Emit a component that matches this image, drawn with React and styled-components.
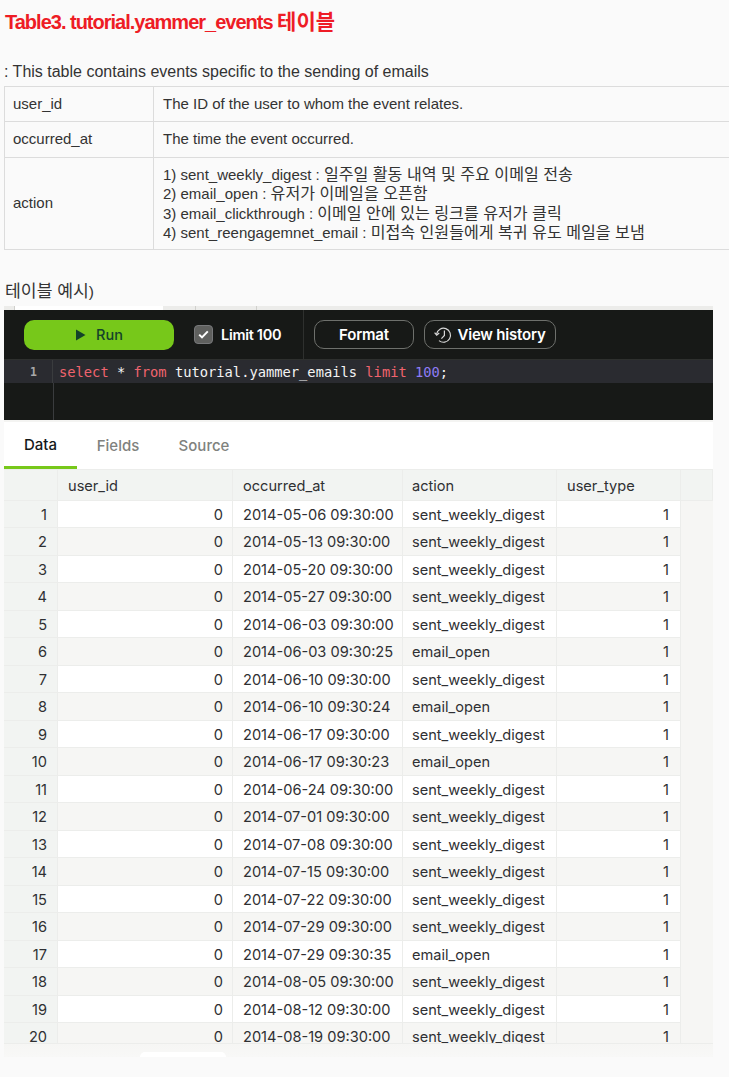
import React from 'react'
import styled, { createGlobalStyle } from 'styled-components'

const GlobalStyle = createGlobalStyle`
  html, body {
    margin: 0;
    background: #fafafa;
    overflow: hidden;
  }
`

const KR = `'Liberation Sans', 'Noto Sans CJK KR', sans-serif`

const Page = styled.div`
  width: 729px;
  height: 1077px;
  overflow: hidden;
  font-family: ${KR};
  color: #333;
`

const Title = styled.h2`
  margin: 0;
  padding: 10px 0 0 5px;
  height: 34px;
  font-size: 20px;
  line-height: 24px;
  font-weight: 700;
  letter-spacing: -1px;
  color: #ee1c25;
`

// hangul runs wider than the latin text around them
const Ko = styled.span`
  font-size: ${p => p.$size}px;
  letter-spacing: 0;
`

const Lead = styled.p`
  margin: 0;
  padding: 17px 0 0 4px;
  height: 25px;
  font-size: 16px;
  line-height: 22px;
`

const InfoTable = styled.table`
  margin: 0 0 0 4px;
  width: 740px;
  border-collapse: collapse;
  table-layout: fixed;
  font-size: 15px;
  line-height: 18.5px;

  td {
    border: 1px solid #dcdcdc;
    padding: 0 9px;
  }
`

const InfoKey = styled.td`
  width: 132px;
  && {
    padding: 0 8px;
  }
`

const InfoRow = styled.tr`
  height: ${p => p.$h}px;
`

const Example = styled.p`
  margin: 0;
  padding: 30px 0 0 5px;
  height: 26px;
  font-size: 15.5px;
  line-height: 22px;
`

const Shot = styled.div`
  margin-left: 4px;
  width: 709px;
  position: relative;
`

const TabStrip = styled.div`
  height: 4px;
  display: flex;
  background: #ececea;
`

const StripTab = styled.div`
  width: ${p => p.$w}px;
  background: ${p => (p.$active ? '#fff' : 'transparent')};
  border-right: ${p => (p.$active ? 'none' : '1px solid #d0d0cc')};
  box-sizing: border-box;
`

const Editor = styled.div`
  background: #171917;
  height: 110px;
`

const Toolbar = styled.div`
  height: 49px;
  display: flex;
  align-items: center;
  padding-left: 20px;
  border-bottom: 1px solid #2e302e;
`

const RunButton = styled.div`
  width: 150px;
  height: 30px;
  border-radius: 10px;
  background: #77c81a;
  color: #14432a;
  display: flex;
  align-items: center;
  justify-content: center;
  gap: 10px;
  font-family: 'Inter', sans-serif;
  font-size: 14.5px;
  font-weight: 500;
`

const LimitBox = styled.div`
  margin-left: 20px;
  width: 19px;
  height: 19px;
  border-radius: 4px;
  background: #5f605e;
  border: 1px solid #77787a;
  box-sizing: border-box;
  display: flex;
  align-items: center;
  justify-content: center;
`

const LimitLabel = styled.span`
  margin-left: 8px;
  width: 82px;
  color: #fff;
  font-family: 'Inter', sans-serif;
  font-size: 14.5px;
  font-weight: 600;
  letter-spacing: -0.3px;
`

const ToolDivider = styled.div`
  width: 1px;
  height: 49px;
  background: #2e302e;
  margin-right: 10px;
`

const OutlineButton = styled.div`
  height: 29px;
  width: ${p => p.$w}px;
  margin-right: 10px;
  box-sizing: border-box;
  border: 1px solid #6e706c;
  border-radius: 10px;
  color: #fff;
  display: flex;
  align-items: center;
  justify-content: center;
  gap: 5px;
  font-family: 'Inter', sans-serif;
  font-size: 15px;
  font-weight: 600;
  letter-spacing: -0.2px;
`

const CodeArea = styled.div`
  height: 60px;
  position: relative;
  font-family: 'DejaVu Sans Mono', monospace;
  font-size: 13.75px;
`

const CodeLine = styled.div`
  height: 23px;
  display: flex;
  align-items: center;
  background: #2a2b30;
  color: #f4f4f4;
`

const CodeText = styled.span`
  white-space: pre;
`

const LineNumber = styled.div`
  width: 49px;
  height: 100%;
  flex-shrink: 0;
  display: flex;
  align-items: center;
  justify-content: center;
  padding-left: 11px;
  box-sizing: border-box;
  border-right: 1px solid #3a3c3e;
  margin-right: 6px;
  color: #a8a8a8;
  font-size: 11.5px;
  font-weight: 700;
`

const Gutter = styled.div`
  height: 37px;
  width: 49px;
  border-right: 1px solid #3a3c3e;
`

const Keyword = styled.span`
  color: #f0646e;
`

const NumberLit = styled.span`
  color: #8f7cf6;
`

const ResultTabs = styled.div`
  height: 49px;
  background: #fff;
  border-top: 2px solid #f4f4f2;
  box-sizing: border-box;
  display: flex;
`

const ResultTab = styled.div`
  width: ${p => p.$w}px;
  height: 47px;
  box-sizing: border-box;
  display: flex;
  align-items: center;
  justify-content: center;
  font-family: 'Inter', sans-serif;
  font-size: 15px;
  font-weight: 500;
  color: ${p => (p.$active ? '#14181a' : '#80827e')};
  border-bottom: ${p => (p.$active ? '3px solid #77c81a' : '0')};
`

const GridClip = styled.div`
  height: 575px;
  overflow: hidden;
  border-top: 1px solid #ecedeb;
  border-bottom: 1px solid #ecedeb;
  box-sizing: border-box;
  background: #f2f4f2;
`

const DataTable = styled.table`
  width: 709px;
  border-collapse: separate;
  border-spacing: 0;
  table-layout: fixed;
  font-family: 'Inter', sans-serif;
  font-size: 14.6px;
  color: #2f3033;
`

const HeadCell = styled.th`
  height: 27.5px;
  padding: 2px 10px 0 ${p => p.$left ?? 10}px;
  text-align: left;
  font-weight: 400;
  background: #f2f4f2;
  border-right: 1px solid #ecedeb;
  border-bottom: 1px solid #ecedeb;
`

const IndexCell = styled.td`
  height: 24.5px;
  padding: 2px 10px 0 0;
  text-align: right;
  background: #f2f4f2;
  border-right: 1px solid #ecedeb;
  border-bottom: 1px solid #ecedeb;
`

const DataCell = styled.td`
  height: 24.5px;
  padding: 2px ${p => p.$right ?? 10}px 0 ${p => p.$left ?? 10}px;
  text-align: ${p => (p.$num ? 'right' : 'left')};
  background: ${p => (p.$odd ? '#fff' : '#f6f6f4')};
  border-right: 1px solid #ecedeb;
  border-bottom: 1px solid #ecedeb;
  white-space: nowrap;
  overflow: hidden;
`

const BlankCell = styled.td`
  background: #f6f6f4;
  border-bottom: 1px solid #f6f6f4;
`

const Footer = styled.div`
  height: 13px;
  background: linear-gradient(#f6f6f4, #f8f8f7);
  display: flex;
  align-items: flex-end;
  padding-left: 136px;
`

const FooterPill = styled.div`
  width: 86px;
  height: 5px;
  background: #fff;
  border-radius: 10px 10px 0 0;
`

const W = 'sent_weekly_digest'
const O = 'email_open'

const rows = [
  ['2014-05-06 09:30:00', W],
  ['2014-05-13 09:30:00', W],
  ['2014-05-20 09:30:00', W],
  ['2014-05-27 09:30:00', W],
  ['2014-06-03 09:30:00', W],
  ['2014-06-03 09:30:25', O],
  ['2014-06-10 09:30:00', W],
  ['2014-06-10 09:30:24', O],
  ['2014-06-17 09:30:00', W],
  ['2014-06-17 09:30:23', O],
  ['2014-06-24 09:30:00', W],
  ['2014-07-01 09:30:00', W],
  ['2014-07-08 09:30:00', W],
  ['2014-07-15 09:30:00', W],
  ['2014-07-22 09:30:00', W],
  ['2014-07-29 09:30:00', W],
  ['2014-07-29 09:30:35', O],
  ['2014-08-05 09:30:00', W],
  ['2014-08-12 09:30:00', W],
  ['2014-08-19 09:30:00', W],
]

const PlayIcon = () => (
  <svg width="11" height="12" viewBox="0 0 11 12">
    <path d="M1 0.5 L10.5 6 L1 11.5 Z" fill="#14432a" />
  </svg>
)

const CheckIcon = () => (
  <svg width="11" height="9" viewBox="0 0 11 9">
    <path d="M1.2 4.6 L4 7.4 L9.8 1.4" fill="none" stroke="#fff" strokeWidth="2" />
  </svg>
)

const HistoryIcon = () => (
  <svg width="18" height="18" viewBox="0 0 18 18" fill="none" stroke="#d8d8d8" strokeWidth="1.2">
    <path d="M2.6 8 A7 7 0 1 1 5 14.6" />
    <path d="M0.6 6.6 L2.7 9.2 L5.2 7" />
    <path d="M10.4 4.6 V9.4 L7.4 12.6" />
  </svg>
)

export default function App() {
  return (
    <Page>
      <GlobalStyle />
      <Title>Table3. tutorial.yammer_events <Ko $size={21}>테이블</Ko></Title>
      <Lead>: This table contains events specific to the sending of emails</Lead>
      <InfoTable>
        <tbody>
          <InfoRow $h={35}>
            <InfoKey>user_id</InfoKey>
            <td>The ID of the user to whom the event relates.</td>
          </InfoRow>
          <InfoRow $h={36}>
            <InfoKey>occurred_at</InfoKey>
            <td>The time the event occurred.</td>
          </InfoRow>
          <InfoRow $h={92}>
            <InfoKey>action</InfoKey>
            <td>
              1) sent_weekly_digest : <Ko $size={16.1}>일주일 활동 내역 및 주요 이메일 전송</Ko><br />
              2) email_open : <Ko $size={16.1}>유저가 이메일을 오픈함</Ko><br />
              3) email_clickthrough : <Ko $size={16.1}>이메일 안에 있는 링크를 유저가 클릭</Ko><br />
              4) sent_reengagemnet_email : <Ko $size={16.1}>미접속 인원들에게 복귀 유도 메일을 보냄</Ko>
            </td>
          </InfoRow>
        </tbody>
      </InfoTable>
      <Example><Ko $size={17.2}>테이블 예시</Ko>)</Example>
      <Shot>
        <TabStrip>
          <StripTab $w={11} />
          <StripTab $w={148} $active />
          <StripTab $w={33} />
          <StripTab $w={61} />
        </TabStrip>
        <Editor>
          <Toolbar>
            <RunButton><PlayIcon />Run</RunButton>
            <LimitBox><CheckIcon /></LimitBox>
            <LimitLabel>Limit 100</LimitLabel>
            <ToolDivider />
            <OutlineButton $w={100}>Format</OutlineButton>
            <OutlineButton $w={132}><HistoryIcon />View history</OutlineButton>
          </Toolbar>
          <CodeArea>
            <CodeLine>
              <LineNumber>1</LineNumber>
              <CodeText><Keyword>select</Keyword> * <Keyword>from</Keyword> tutorial.yammer_emails <Keyword>limit</Keyword> <NumberLit>100</NumberLit>;</CodeText>
            </CodeLine>
            <Gutter />
          </CodeArea>
        </Editor>
        <ResultTabs>
          <ResultTab $w={73} $active>Data</ResultTab>
          <ResultTab $w={82}>Fields</ResultTab>
          <ResultTab $w={90}>Source</ResultTab>
        </ResultTabs>
        <GridClip>
          <DataTable>
            <colgroup>
              <col width="54" />
              <col width="175" />
              <col width="170" />
              <col width="154" />
              <col width="124" />
              <col />
            </colgroup>
            <thead>
              <tr>
                <HeadCell />
                <HeadCell>user_id</HeadCell>
                <HeadCell>occurred_at</HeadCell>
                <HeadCell $left={9}>action</HeadCell>
                <HeadCell>user_type</HeadCell>
                <HeadCell />
              </tr>
            </thead>
            <tbody>
              {rows.map(([time, action], i) => (
                <tr key={i}>
                  <IndexCell>{i + 1}</IndexCell>
                  <DataCell $num $right={9} $odd={i % 2 === 0}>0</DataCell>
                  <DataCell $odd={i % 2 === 0}>{time}</DataCell>
                  <DataCell $left={9} $odd={i % 2 === 0}>{action}</DataCell>
                  <DataCell $num $right={11} $odd={i % 2 === 0}>1</DataCell>
                  <BlankCell />
                </tr>
              ))}
            </tbody>
          </DataTable>
        </GridClip>
        <Footer><FooterPill /></Footer>
      </Shot>
    </Page>
  )
}
